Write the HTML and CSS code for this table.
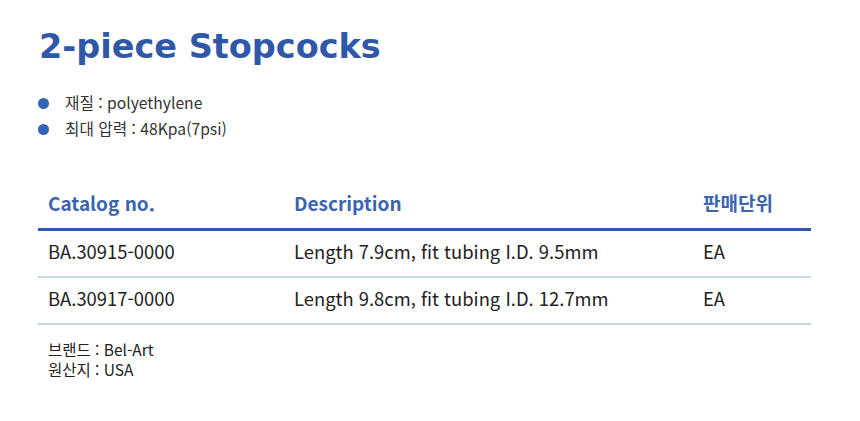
FILE: index.html
```html
<!DOCTYPE html>
<html lang="ko">
<head>
<meta charset="utf-8">
<link rel="stylesheet" href="styles.css">
</head>
<body>
<div class="page">
  <h1 class="title">2-piece Stopcocks</h1>
  <ul class="specs">
    <li>재질 : polyethylene</li>
    <li>최대 압력 : 48Kpa(7psi)</li>
  </ul>
  <table class="catalog">
    <colgroup><col class="c1"><col class="c2"><col class="c3"></colgroup>
    <thead>
      <tr><th>Catalog no.</th><th>Description</th><th>판매단위</th></tr>
    </thead>
    <tbody>
      <tr><td>BA.30915-0000</td><td>Length 7.9cm, fit tubing I.D. 9.5mm</td><td>EA</td></tr>
      <tr><td>BA.30917-0000</td><td>Length 9.8cm, fit tubing I.D. 12.7mm</td><td>EA</td></tr>
    </tbody>
  </table>
  <div class="origin">
    <div>브랜드 : Bel-Art</div>
    <div>원산지 : USA</div>
  </div>
</div>
</body>
</html>
```

FILE: styles.css
```css
html, body {
  margin: 0;
  padding: 0;
  background: #ffffff;
}
body {
  font-family: "Noto Sans CJK KR", "Noto Sans", sans-serif;
  color: #222222;
}
.page {
  padding: 27px 49px 0 38px;
}
.title {
  margin: 0;
  padding-left: 1px;
  font-family: "DejaVu Sans", "Noto Sans CJK KR", sans-serif;
  font-size: 33.5px;
  font-weight: 700;
  line-height: 40px;
  color: #2f58a8;
}
.specs {
  list-style: none;
  margin: 23px 0 0 0;
  padding: 0;
}
.specs li {
  display: flex;
  align-items: center;
  font-size: 15.7px;
  line-height: 26px;
  color: #333333;
}
.specs li::before {
  content: "";
  width: 11px;
  height: 11px;
  border-radius: 50%;
  background: #3563b5;
  margin-right: 16px;
  flex: none;
}
.catalog {
  width: 100%;
  table-layout: fixed;
  border-collapse: collapse;
  margin-top: 38px;
}
.catalog .c1 { width: 246px; }
.catalog .c2 { width: 409px; }
.catalog th {
  text-align: left;
  font-size: 19px;
  font-weight: 700;
  color: #3b65ae;
  padding: 0 0 3px 10px;
  height: 45px;
  vertical-align: middle;
  border-bottom: 3px solid #2f58a8;
}
.catalog td {
  font-size: 18.4px;
  color: #222222;
  padding: 0 0 6px 10px;
  height: 39px;
  vertical-align: middle;
  border-bottom: 2px solid #c8d6ea;
}
.origin {
  margin-top: 14px;
  padding-left: 10px;
  font-size: 15.5px;
  line-height: 20px;
  color: #222222;
}
```
